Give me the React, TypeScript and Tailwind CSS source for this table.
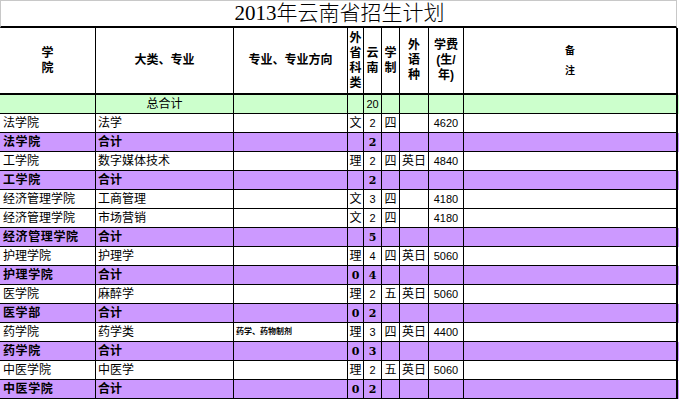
import React from 'react';

type Row = {
  sub?: boolean;
  school: string;
  major: string;
  dir?: string;
  kind?: string;
  yn: string;
  years?: string;
  lang?: string;
  fee?: string;
};

const rows: Row[] = [
  { school: '法学院', major: '法学', kind: '文', yn: '2', years: '四', fee: '4620' },
  { sub: true, school: '法学院', major: '合计', yn: '2' },
  { school: '工学院', major: '数字媒体技术', kind: '理', yn: '2', years: '四', lang: '英日', fee: '4840' },
  { sub: true, school: '工学院', major: '合计', yn: '2' },
  { school: '经济管理学院', major: '工商管理', kind: '文', yn: '3', years: '四', fee: '4180' },
  { school: '经济管理学院', major: '市场营销', kind: '文', yn: '2', years: '四', fee: '4180' },
  { sub: true, school: '经济管理学院', major: '合计', yn: '5' },
  { school: '护理学院', major: '护理学', kind: '理', yn: '4', years: '四', lang: '英日', fee: '5060' },
  { sub: true, school: '护理学院', major: '合计', kind: '0', yn: '4' },
  { school: '医学院', major: '麻醉学', kind: '理', yn: '2', years: '五', lang: '英日', fee: '5060' },
  { sub: true, school: '医学部', major: '合计', kind: '0', yn: '2' },
  { school: '药学院', major: '药学类', dir: '药学、药物制剂', kind: '理', yn: '3', years: '四', lang: '英日', fee: '4400' },
  { sub: true, school: '药学院', major: '合计', kind: '0', yn: '3' },
  { school: '中医学院', major: '中医学', kind: '理', yn: '2', years: '五', lang: '英日', fee: '5060' },
  { sub: true, school: '中医学院', major: '合计', kind: '0', yn: '2' },
];

const grid = 'grid grid-cols-[96px_138px_114px_16px_18px_18px_29px_35px_214px]';
const cell = 'border-r border-b border-black flex items-center overflow-hidden whitespace-nowrap';
const last = 'border-r-2 border-b border-black';

function HeadCell({ children, className = '' }: { children: React.ReactNode; className?: string }) {
  return (
    <div className={`border-r border-b-2 border-black flex items-center justify-center text-center font-bold text-[12px] leading-[15px] ${className}`}>
      <div>{children}</div>
    </div>
  );
}

export default function App() {
  return (
    <div className="w-[679px] h-[399px] bg-white overflow-hidden font-['Liberation_Sans','Noto_Sans_CJK_SC',sans-serif] text-black">
      {/* title */}
      <div className="w-[677px] h-[28px] border-t border-l border-r border-t-[#c8c8c8] border-l-[#c8c8c8] border-r-[#c8c8c8] border-b-2 border-b-black flex items-center justify-center">
        <span className="font-['Liberation_Serif','Noto_Sans_CJK_SC',serif] text-[21px] leading-none font-light pl-[2px]">
          2013年云南省招生计划
        </span>
      </div>

      {/* header */}
      <div className={`${grid} h-[67px]`}>
        <HeadCell>学<br />院</HeadCell>
        <HeadCell>大类、专业</HeadCell>
        <HeadCell>专业、专业方向</HeadCell>
        <HeadCell className="items-start pt-[3px]">外<br />省<br />科<br />类</HeadCell>
        <HeadCell>云<br />南</HeadCell>
        <HeadCell>学<br />制</HeadCell>
        <HeadCell>外<br />语<br />种</HeadCell>
        <HeadCell className="text-[11.5px]">学费<br />(生/<br />年)</HeadCell>
        <div className="border-r-2 border-b-2 border-black flex items-center justify-center font-bold text-[10px] leading-[20px] text-center">
          <div>备<br />注</div>
        </div>
      </div>

      {/* total */}
      <div className={`${grid} h-[19px] bg-[#ccffcc] text-[12px] leading-none`}>
        <div className={cell} />
        <div className={`${cell} justify-center`}>总合计</div>
        <div className={cell} />
        <div className={cell} />
        <div className={`${cell} justify-center text-[11px]`}>20</div>
        <div className={cell} />
        <div className={cell} />
        <div className={cell} />
        <div className={last} />
      </div>

      {rows.map((r, i) => (
        <div
          key={i}
          className={`${grid} h-[19px] text-[12px] leading-none ${r.sub ? 'bg-[#cc99ff] font-bold' : 'bg-white'}`}
        >
          <div className={`${cell} pl-[3px] ${r.sub ? 'tracking-[0.6px]' : ''}`}>{r.school}</div>
          <div className={`${cell} pl-[2px]`}>{r.major}</div>
          <div className={`${cell} pl-[2px] text-[8px] font-bold`}>{r.dir}</div>
          <div className={`${cell} justify-center ${r.sub ? "font-['DejaVu_Serif',serif] text-[11px]" : ''}`}>{r.kind}</div>
          <div className={`${cell} justify-center ${r.sub ? "font-['DejaVu_Serif',serif] text-[11px]" : 'text-[11px]'}`}>{r.yn}</div>
          <div className={`${cell} justify-center`}>{r.years}</div>
          <div className={`${cell} justify-center`}>{r.lang}</div>
          <div className={`${cell} justify-center text-[11px]`}>{r.fee}</div>
          <div className={last} />
        </div>
      ))}
    </div>
  );
}
